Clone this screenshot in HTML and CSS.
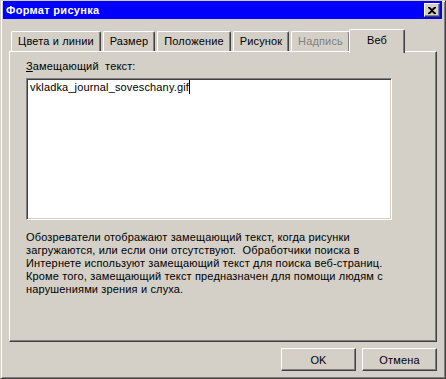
FILE: index.html
```html
<!DOCTYPE html>
<html lang="ru">
<head>
    <meta charset="UTF-8">
    <title>Формат рисунка</title>
    <link rel="stylesheet" href="styles.css">
</head>
<body>
    <div class="window">
        <div class="titlebar">
            <span class="title">Формат рисунка</span>
            <button class="close-btn" aria-label="Закрыть">
                <svg width="8" height="7" viewBox="0 0 8 7">
                    <path d="M0 0h2l2 2 2-2h2v1L5 3.5 8 6v1H6L4 5 2 7H0V6l3-2.5L0 1z" fill="#000"/>
                </svg>
            </button>
        </div>

        <div class="dialog">
            <div class="tabs">
                <div class="tab">Цвета и линии</div>
                <div class="tab">Размер</div>
                <div class="tab">Положение</div>
                <div class="tab">Рисунок</div>
                <div class="tab disabled">Надпись</div>
                <div class="tab active">Веб</div>
            </div>

            <div class="panel">
                <label class="field-label" for="alt-text"><u>З</u>амещающий&nbsp; текст:</label>
                <div class="textbox" id="alt-text">vkladka_journal_soveschany.gif<span class="caret"></span></div>
                <p class="hint">
                    Обозреватели отображают замещающий текст, когда рисунки<br>
                    загружаются, или если они отсутствуют.&nbsp; Обработчики поиска в<br>
                    Интернете используют замещающий текст для поиска веб-страниц.<br>
                    Кроме того, замещающий текст предназначен для помощи людям с<br>
                    нарушениями зрения и слуха.
                </p>
            </div>

            <div class="buttons">
                <button class="btn">OK</button>
                <button class="btn">Отмена</button>
            </div>
        </div>
    </div>
</body>
</html>
```

FILE: styles.css
```css
html, body {
    margin: 0;
    padding: 0;
}

body {
    width: 446px;
    height: 379px;
    background: #d4d0c8;
    font-family: "Liberation Sans", Arial, sans-serif;
    font-size: 11px;
    letter-spacing: 0.15px;
    color: #000;
}

.window {
    box-sizing: border-box;
    width: 446px;
    height: 379px;
    background: #d4d0c8;
    border-top: 1px solid #d4d0c8;
    border-left: 1px solid #d4d0c8;
    border-right: 1px solid #404040;
    border-bottom: 1px solid #404040;
    box-shadow: inset 1px 1px 0 #fff, inset -1px -1px 0 #808080;
    padding: 0 3px 3px 2px;
    display: flex;
    flex-direction: column;
}

.titlebar {
    height: 18px;
    background: #0000ff;
    display: flex;
    align-items: center;
    justify-content: space-between;
    padding: 0 2px 0 3px;
}

.title {
    color: #fff;
    font-weight: bold;
    font-size: 11px;
    letter-spacing: 0.3px;
}

.close-btn {
    box-sizing: border-box;
    width: 16px;
    height: 14px;
    padding: 0;
    background: #d4d0c8;
    border-top: 1px solid #fff;
    border-left: 1px solid #fff;
    border-right: 1px solid #404040;
    border-bottom: 1px solid #404040;
    box-shadow: inset -1px -1px 0 #808080;
    display: flex;
    align-items: center;
    justify-content: center;
}

.dialog {
    flex: 1;
    padding: 10px 5px 0 6px;
    display: flex;
    flex-direction: column;
}

.tabs {
    display: flex;
    align-items: flex-end;
    padding-left: 2px;
    height: 22px;
    position: relative;
    z-index: 1;
}

.tab {
    box-sizing: border-box;
    height: 20px;
    padding: 3px 0 0 0;
    text-align: center;
    white-space: nowrap;
    border-top: 1px solid #fff;
    border-left: 1px solid #fff;
    border-right: 1px solid #404040;
    box-shadow: inset -1px 0 0 #808080;
    border-radius: 2px 2px 0 0;
    margin-right: 2px;
    background: #d4d0c8;
}

.tab:nth-child(1) { width: 90px; }
.tab:nth-child(2) { width: 52px; }
.tab:nth-child(3) { width: 74px; }
.tab:nth-child(4) { width: 56px; }
.tab:nth-child(5) { width: 59px; margin-right: 0; }

.tab.disabled {
    color: #808080;
}

.tab.active {
    height: 24px;
    width: 56px;
    margin-left: -1px;
    margin-bottom: -2px;
    padding-top: 4px;
}

.panel {
    box-sizing: border-box;
    height: 291px;
    border-top: 1px solid #fff;
    border-left: 1px solid #fff;
    border-right: 1px solid #404040;
    border-bottom: 1px solid #404040;
    box-shadow: inset -1px -1px 0 #808080;
    padding: 8px 16px 0 16px;
}

.field-label {
    display: block;
    height: 18px;
    line-height: 13px;
}

.textbox {
    box-sizing: border-box;
    width: 366px;
    height: 142px;
    background: #fff;
    border-top: 1px solid #808080;
    border-left: 1px solid #808080;
    border-right: 1px solid #fff;
    border-bottom: 1px solid #fff;
    box-shadow: inset 1px 1px 0 #404040, inset -1px -1px 0 #d4d0c8;
    padding: 1px 3px;
    line-height: 15px;
}

.caret {
    display: inline-block;
    width: 1px;
    height: 14px;
    background: #000;
    vertical-align: -3px;
}

.hint {
    margin: 11px 0 0 0;
    line-height: 13px;
}

.buttons {
    display: flex;
    justify-content: flex-end;
    gap: 6px;
    padding: 6px 0 0 0;
}

.btn {
    box-sizing: border-box;
    width: 75px;
    height: 23px;
    background: #d4d0c8;
    font-family: "Liberation Sans", Arial, sans-serif;
    font-size: 11px;
    letter-spacing: 0.15px;
    color: #000;
    border-top: 1px solid #fff;
    border-left: 1px solid #fff;
    border-right: 1px solid #404040;
    border-bottom: 1px solid #404040;
    box-shadow: inset -1px -1px 0 #808080;
    padding: 0;
}
```
